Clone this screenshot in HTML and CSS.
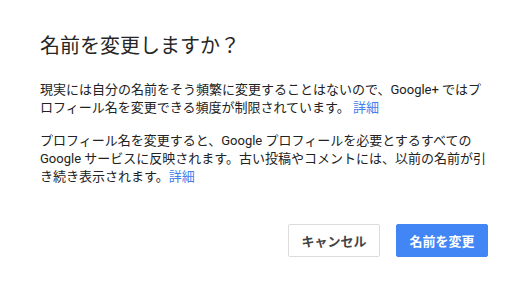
FILE: index.html
```html
<!DOCTYPE html>
<html lang="ja">
<head>
<meta charset="utf-8">
<title>名前を変更しますか？</title>
<link rel="stylesheet" href="styles.css">
</head>
<body>
<div class="dialog">
  <h1 class="dialog-title">名前を変更しますか？</h1>
  <div class="dialog-body">
    <p class="dialog-text">現実には自分の名前をそう頻繁に変更することはないので、Google+ ではプロフィール名を変更できる頻度が制限されています。 <a class="link" href="#">詳細</a></p>
    <p class="dialog-text">プロフィール名を変更すると、Google プロフィールを必要とするすべての Google サービスに反映されます。古い投稿やコメントには、以前の名前が引き続き表示されます。<a class="link" href="#">詳細</a></p>
  </div>
  <div class="dialog-actions">
    <button class="btn btn-cancel" type="button">キャンセル</button>
    <button class="btn btn-primary" type="button">名前を変更</button>
  </div>
</div>
</body>
</html>
```
FILE: styles.css
```css
html, body {
  margin: 0;
  padding: 0;
  background: #fff;
}
body {
  font-family: Roboto, "Noto Sans CJK JP", sans-serif;
  color: #222;
}
.dialog {
  width: 528px;
  box-sizing: border-box;
  padding: 34px 40px 0 40px;
}
.dialog-title {
  margin: 0;
  font-size: 20px;
  line-height: 24px;
  font-weight: 400;
  color: #262626;
}
.dialog-body {
  margin-top: 23px;
}
.dialog-text {
  margin: 0 0 15px 0;
  font-size: 13px;
  line-height: 18px;
}
.link {
  color: #427fed;
  text-decoration: none;
}
.dialog-actions {
  display: flex;
  justify-content: flex-end;
  gap: 16px;
  margin-top: 38px;
}
.btn {
  box-sizing: border-box;
  min-width: 92px;
  height: 33px;
  padding: 0 12px;
  border-radius: 2px;
  font-family: Roboto, "Noto Sans CJK JP", sans-serif;
  font-size: 13px;
  font-weight: 700;
  cursor: pointer;
}
.btn-cancel {
  background: #fff;
  border: 1px solid #dcdcdc;
  color: #444;
}
.btn-primary {
  background: #4285f4;
  border: 1px solid #4285f4;
  color: #fff;
}
```
